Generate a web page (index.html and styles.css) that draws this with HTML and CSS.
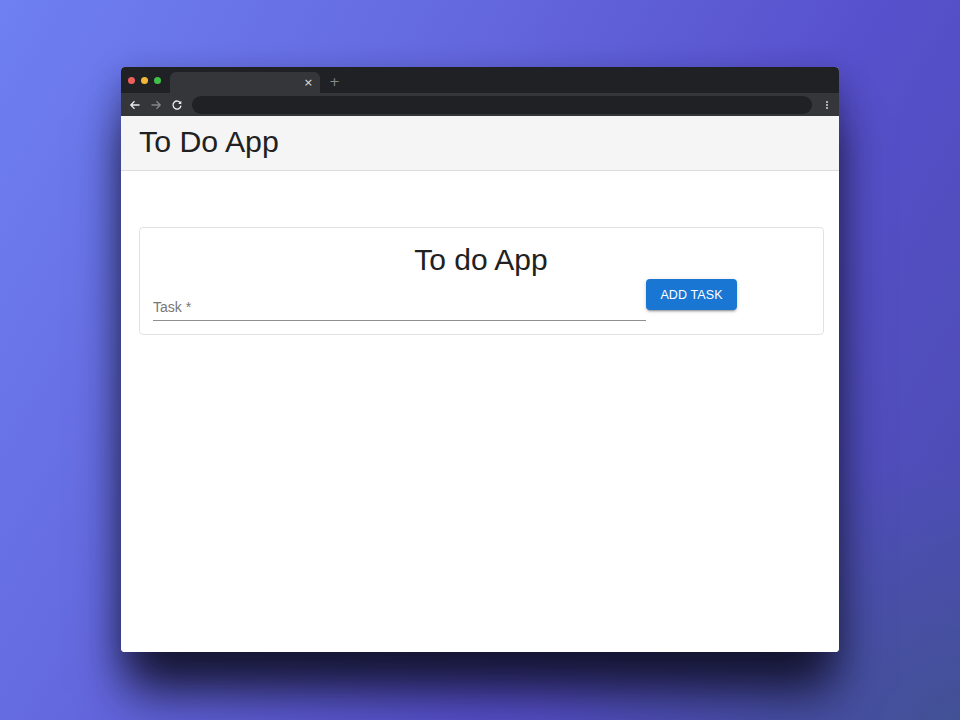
FILE: index.html
```html
<!DOCTYPE html>
<html lang="en">
<head>
<meta charset="utf-8">
<title>To Do App</title>
<link rel="stylesheet" href="styles.css">
</head>
<body>
<div class="stage">
  <div class="window">
    <div class="tabbar">
      <div class="lights">
        <span class="light red"></span>
        <span class="light yellow"></span>
        <span class="light green"></span>
      </div>
      <div class="tab">
        <span class="tab-close">×</span>
      </div>
      <span class="tab-new">+</span>
    </div>
    <div class="toolbar">
      <svg class="nav-icon" width="12" height="12" viewBox="0 0 12 12"><path d="M10.5 6H2M5.5 2.3L1.8 6l3.7 3.7" fill="none" stroke="#e8eaed" stroke-width="1.3"/></svg>
      <svg class="nav-icon" width="12" height="12" viewBox="0 0 12 12"><path d="M1.5 6H10M6.5 2.3L10.2 6 6.5 9.7" fill="none" stroke="#85878b" stroke-width="1.3"/></svg>
      <svg class="nav-icon" width="12" height="12" viewBox="0 0 12 12"><path d="M9.6 4.2A4 4 0 1 0 10 6.6" fill="none" stroke="#e8eaed" stroke-width="1.3"/><path d="M10.3 1.8v3.2H7.1z" fill="#e8eaed"/></svg>
      <div class="address"></div>
      <div class="kebab"><span></span><span></span><span></span></div>
    </div>
    <div class="page">
      <header class="appbar">
        <h1 class="appbar-title">To Do App</h1>
      </header>
      <main class="main">
        <section class="card">
          <h2 class="card-title">To do App</h2>
          <div class="form-row">
            <label class="field">
              <span class="field-label">Task *</span>
            </label>
            <button class="btn" type="button">ADD TASK</button>
          </div>
        </section>
      </main>
    </div>
  </div>
</div>
</body>
</html>
```

FILE: styles.css
```css
* { box-sizing: border-box; }
html, body { margin: 0; height: 100%; }
body {
  width: 960px;
  height: 720px;
  overflow: hidden;
  font-family: "Liberation Sans", Arial, sans-serif;
  background:
    radial-gradient(ellipse 420px 260px at 960px 720px, rgba(60,85,130,0.55), rgba(60,85,130,0) 100%),
    linear-gradient(120deg, #6e80f2 0%, #6468de 35%, #5750cc 65%, #4a4cad 100%);
}
.stage {
  padding: 67px 0 0 121px;
}
.window {
  width: 718px;
  height: 585px;
  border-radius: 4px;
  overflow: hidden;
  background: #fff;
  display: flex;
  flex-direction: column;
  box-shadow: 0 45px 45px -6px rgba(16,16,38,0.9), 0 10px 30px rgba(20,20,50,0.35);
}
.tabbar {
  height: 26px;
  background: #202124;
  display: flex;
  align-items: flex-end;
  flex-shrink: 0;
}
.lights {
  display: flex;
  gap: 6px;
  padding: 0 0 9px 7px;
  width: 49px;
}
.light {
  width: 7px;
  height: 7px;
  border-radius: 50%;
}
.red { background: #ec5f5a; }
.yellow { background: #f0b73c; }
.green { background: #3fc046; }
.tab {
  width: 150px;
  height: 21px;
  background: #35363a;
  border-radius: 6px 6px 0 0;
  display: flex;
  align-items: center;
  justify-content: flex-end;
  padding-right: 7px;
}
.tab-close {
  color: #e0e0e0;
  font-size: 11px;
  line-height: 1;
  font-family: "DejaVu Sans", sans-serif;
}
.tab-new {
  color: #85878b;
  font-size: 13px;
  line-height: 1;
  padding: 0 0 5px 9px;
  font-family: "DejaVu Sans", sans-serif;
}
.toolbar {
  height: 23px;
  background: #35363a;
  display: flex;
  align-items: center;
  padding-left: 8px;
  gap: 9px;
  flex-shrink: 0;
}
.nav-icon { display: block; }
.address {
  width: 620px;
  height: 18px;
  background: #202124;
  border-radius: 9px;
}
.kebab {
  display: flex;
  flex-direction: column;
  gap: 1px;
  margin-left: 5px;
}
.kebab span {
  width: 2px;
  height: 2px;
  background: #d7d8da;
  border-radius: 50%;
}
.page {
  flex: 1;
  background: #fff;
}
.appbar {
  height: 55px;
  background: #f5f5f5;
  border-bottom: 1px solid #dcdcdc;
  padding: 8px 18px 0;
}
.appbar-title {
  margin: 0;
  font-weight: 400;
  font-size: 30.3px;
  color: #212121;
  line-height: 36px;
}
.main {
  padding: 56px 15px 0 18px;
}
.card {
  border: 1px solid #e2e2e2;
  border-radius: 4px;
  padding: 14px 14px 13px 13px;
}
.card-title {
  margin: 0;
  text-align: center;
  font-weight: 400;
  font-size: 30px;
  line-height: 36px;
  color: #212121;
}
.form-row {
  display: flex;
  align-items: flex-start;
  margin-top: -4px;
}
.field {
  width: 493px;
  height: 47px;
  border-bottom: 1px solid #8f8f8f;
  display: flex;
  align-items: flex-end;
  padding-bottom: 4px;
}
.field-label {
  font-size: 14px;
  color: #777;
  line-height: 18px;
}
.btn {
  margin-top: 5px;
  width: 91px;
  height: 31px;
  border: 0;
  border-radius: 4px;
  background: #1976d2;
  color: #fff;
  font-family: "Liberation Sans", Arial, sans-serif;
  font-weight: 400;
  font-size: 12.5px;
  letter-spacing: 0.1px;
  box-shadow: 0 3px 1px -2px rgba(0,0,0,0.2), 0 2px 2px rgba(0,0,0,0.14), 0 1px 5px rgba(0,0,0,0.12);
  padding: 0;
}
```
